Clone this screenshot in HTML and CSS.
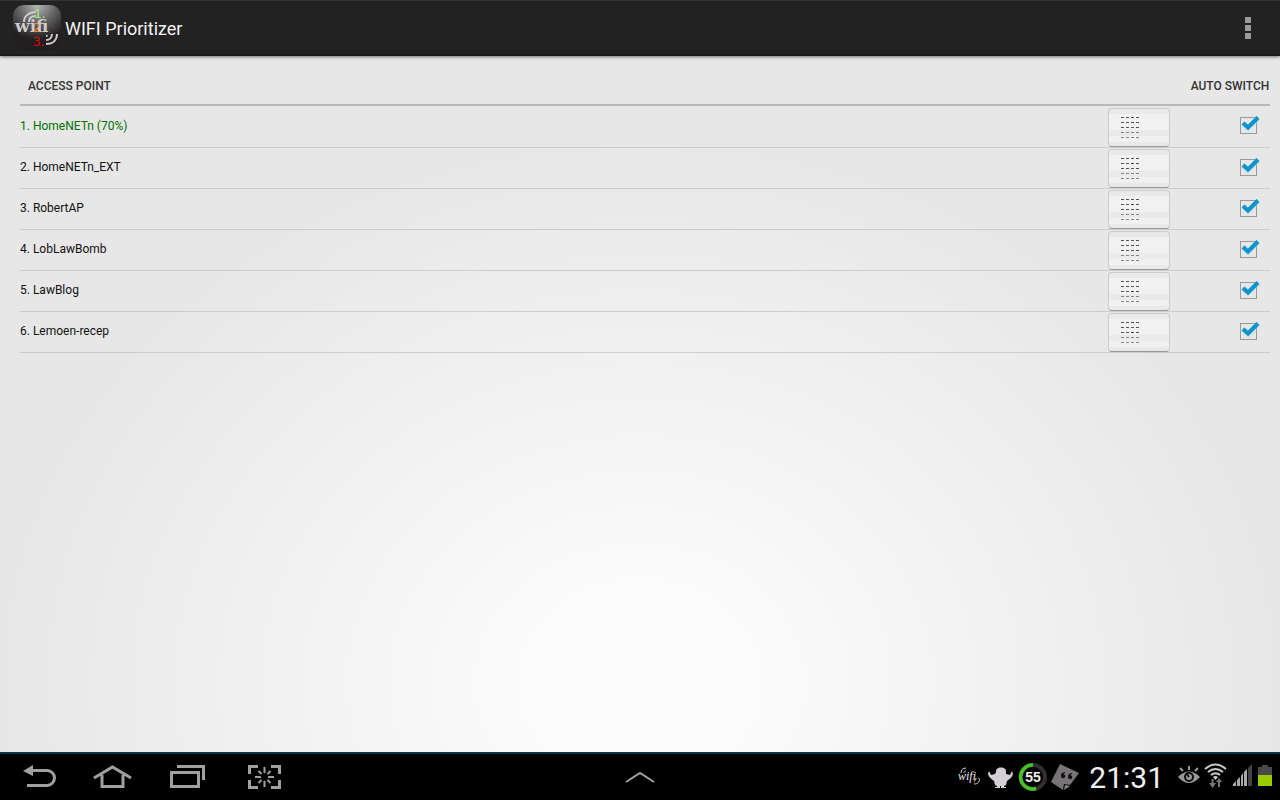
FILE: index.html
```html
<!DOCTYPE html>
<html lang="en">
<head>
    <meta charset="UTF-8">
    <meta name="viewport" content="width=device-width, initial-scale=1.0">
    <title>WIFI Prioritizer</title>
    <link rel="stylesheet" href="styles.css">
</head>
<body>
    <!-- shared icons -->
    <svg class="defs" width="0" height="0" aria-hidden="true">
        <symbol id="grip" viewBox="0 0 19 23">
            <path d="M0 1.5h19M0 6.5h19M0 11.5h19" stroke="#555" stroke-dasharray="3 2" fill="none"/>
            <path d="M0 16.5h19M0 21.5h19" stroke="#858585" stroke-dasharray="3 2" fill="none"/>
        </symbol>
        <symbol id="tick" viewBox="0 0 20 18">
            <path d="M2 8l5 5L17 3" stroke="#9fd9ee" stroke-width="6" fill="none" opacity=".4"/>
            <path d="M2 8l5 4.500L17 2.500" stroke="#0d94cc" stroke-width="4" fill="none"/>
        </symbol>
    </svg>

    <header class="action-bar">
        <svg class="app-icon" viewBox="0 0 48 46" role="img" aria-label="WIFI Prioritizer">
            <defs>
                <radialGradient id="shine" cx="50%" cy="0%" r="75%">
                    <stop offset="0" stop-color="#b5b5b5"/>
                    <stop offset=".5" stop-color="#666"/>
                    <stop offset="1" stop-color="#231f20"/>
                </radialGradient>
            </defs>
            <rect width="48" height="46" rx="11" fill="url(#shine)"/>
            <g fill="none" stroke="#ccc" stroke-width="2">
                <path d="M11 17C11 11 16 7 23 7M16 17c0-4 3-6 7-6"/>
                <path d="M44 29c0 6-4 10-11 10M39 29c0 4-3 6-6 6M34 30c0 1-1 1-1 1"/>
            </g>
            <text x="2" y="27" class="logo-word">wifi</text>
            <g class="logo-num">
                <text x="21" y="13" fill="#a5f57a">1.</text>
                <text x="20" y="27" fill="#f58634">2</text>
                <text x="20" y="41" fill="#f00000">3.</text>
            </g>
        </svg>
        <h1>WIFI Prioritizer</h1>
        <button class="menu" type="button" aria-label="More options">
            <svg width="6" height="22" viewBox="0 0 6 22"><path d="M0 0h6v6H0zM0 8h6v6H0zM0 16h6v6H0z" fill="#999"/></svg>
        </button>
    </header>

    <main class="content">
        <table class="networks">
            <thead>
                <tr>
                    <th class="name">Access point</th>
                    <th class="order"></th>
                    <th class="switch">Auto switch</th>
                </tr>
            </thead>
            <tbody>
                <tr class="connected">
                    <td class="name">1. HomeNETn (70%)</td>
                    <td class="order"><button class="handle" type="button" aria-label="Move HomeNETn"><svg><use href="#grip"/></svg></button></td>
                    <td class="switch"><label class="check"><input type="checkbox" aria-label="Auto switch HomeNETn" checked><svg><use href="#tick"/></svg></label></td>
                </tr>
                <tr>
                    <td class="name">2. HomeNETn_EXT</td>
                    <td class="order"><button class="handle" type="button" aria-label="Move HomeNETn_EXT"><svg><use href="#grip"/></svg></button></td>
                    <td class="switch"><label class="check"><input type="checkbox" aria-label="Auto switch HomeNETn_EXT" checked><svg><use href="#tick"/></svg></label></td>
                </tr>
                <tr>
                    <td class="name">3. RobertAP</td>
                    <td class="order"><button class="handle" type="button" aria-label="Move RobertAP"><svg><use href="#grip"/></svg></button></td>
                    <td class="switch"><label class="check"><input type="checkbox" aria-label="Auto switch RobertAP" checked><svg><use href="#tick"/></svg></label></td>
                </tr>
                <tr>
                    <td class="name">4. LobLawBomb</td>
                    <td class="order"><button class="handle" type="button" aria-label="Move LobLawBomb"><svg><use href="#grip"/></svg></button></td>
                    <td class="switch"><label class="check"><input type="checkbox" aria-label="Auto switch LobLawBomb" checked><svg><use href="#tick"/></svg></label></td>
                </tr>
                <tr>
                    <td class="name">5. LawBlog</td>
                    <td class="order"><button class="handle" type="button" aria-label="Move LawBlog"><svg><use href="#grip"/></svg></button></td>
                    <td class="switch"><label class="check"><input type="checkbox" aria-label="Auto switch LawBlog" checked><svg><use href="#tick"/></svg></label></td>
                </tr>
                <tr>
                    <td class="name">6. Lemoen-recep</td>
                    <td class="order"><button class="handle" type="button" aria-label="Move Lemoen-recep"><svg><use href="#grip"/></svg></button></td>
                    <td class="switch"><label class="check"><input type="checkbox" aria-label="Auto switch Lemoen-recep" checked><svg><use href="#tick"/></svg></label></td>
                </tr>
            </tbody>
        </table>
    </main>

    <footer class="system-bar">
        <nav class="keys">
            <button type="button" aria-label="Back">
                <svg viewBox="0 0 43 28"><path d="M14 7.500h15a7.500 7.500 0 0 1 0 15H9" fill="none" stroke="#a0a0a0" stroke-width="3"/><path d="M5 8L15 2v11z" fill="#a0a0a0"/></svg>
            </button>
            <button type="button" aria-label="Home">
                <svg viewBox="0 0 43 28"><path d="M9 12v11.500h21V12M1 15L19.500 4 38 15" fill="none" stroke="#a0a0a0" stroke-width="3"/></svg>
            </button>
            <button type="button" aria-label="Recent apps">
                <svg viewBox="0 0 43 28"><path d="M3.500 9.500h27v14h-27zM9 3.500h26.500V17" fill="none" stroke="#a0a0a0" stroke-width="3"/></svg>
            </button>
            <button type="button" aria-label="Screenshot">
                <svg viewBox="0 0 43 28">
                    <path d="M6.500 11V3.500H15M28 3.500h8.500V11M36.500 17v7.500H28M15 24.500H6.500V17" fill="none" stroke="#a0a0a0" stroke-width="3"/>
                    <path d="M21.500 4v6M21.500 18v6M12 14h6M25 14h6M15.500 8l3 3M27.500 8l-3 3M15.500 20l3-3M27.500 20l-3-3" fill="none" stroke="#a0a0a0" stroke-width="2"/>
                </svg>
            </button>
        </nav>

        <button class="expand" type="button" aria-label="Show mini apps">
            <svg width="30" height="14" viewBox="0 0 30 14"><path d="M1 12L15 3l14 9" fill="none" stroke="#a0a0a0" stroke-width="2"/></svg>
        </button>

        <div class="status">
            <div class="notices">
                <svg viewBox="0 0 32 28" role="img" aria-label="WIFI Prioritizer running">
                    <g fill="none" stroke="#ddd">
                        <path d="M8 10c0-3 2-5 5-5M11 10c0-1 1-2 2-2M26 15c1 4-1 6-5 6M23 15c0 2-1 3-2 3"/>
                    </g>
                    <text x="5" y="17" class="mini-word">wifi</text>
                </svg>
                <svg viewBox="0 0 32 28" role="img" aria-label="Android notification">
                    <path d="M11 9c0-3 1-4 3-4l1-1 1 1 1-1 1 1c2 0 3 1 3 4v2l4 1 2-4 1 3c-1 4-4 5-6 7l-1 4-2 1v1h2v1h-5v-2h-1v2h-5v-1h2v-1l-2-1-1-4c-2-2-5-3-6-7l1-3 2 4 4-1z" fill="#d4cfd4"/>
                </svg>
                <svg viewBox="0 0 32 28" role="img" aria-label="Battery 55 percent">
                    <circle cx="16" cy="14" r="12" fill="none" stroke="#303030" stroke-width="4"/>
                    <path d="M16 2a12 12 0 1 0 3 23.500" fill="none" stroke="#287f18" stroke-width="4"/>
                    <path d="M16 2a12 12 0 1 0 3 23.500" fill="none" stroke="#4cc32b" stroke-width="3"/>
                    <text x="16" y="19" class="level">55</text>
                </svg>
                <svg viewBox="0 0 32 28" role="img" aria-label="Quote">
                    <path d="M11 1l19 9-9 12-6-1-1 6L2 19z" fill="#777377"/>
                    <path d="M16 22l5 1-6 4z" fill="#8a868a"/>
                    <path d="M16 9c-4 0-5 4-3 6 2 1 4-1 3-3l-2-1 2-1zM23 10c-4 0-5 4-3 6 2 1 4-1 3-3l-2-1 2-1z" fill="#111"/>
                </svg>
            </div>
            <time class="clock">21:31</time>
            <div class="signals">
                <svg viewBox="0 0 26 28" role="img" aria-label="Smart stay">
                    <path d="M2 14q11-11 22 0-11 12-22 0z" fill="#999"/>
                    <circle cx="13" cy="14" r="5" fill="#111"/>
                    <circle cx="13" cy="14" r="3" fill="#999"/>
                    <path d="M13 14l-3-4" stroke="#111" stroke-width="2"/>
                    <path d="M13 3v4M4 5l3 3M22 5l-3 3" stroke="#999" stroke-width="2"/>
                </svg>
                <svg viewBox="0 0 26 28" role="img" aria-label="Wi-Fi">
                    <path d="M3 6q10.500-9 21 0M6 9q7.500-6 15 0M9 12q4.500-3.500 9 0" fill="none" stroke="#ccc" stroke-width="2"/>
                    <path d="M11 14q2.500-2 5 0l-2.500 3z" fill="#ccc"/>
                    <path d="M10.500 16v6M17 24v-6" stroke="#777" stroke-width="2"/>
                    <path d="M7 20h7l-3.500 5zM14 19h6l-3-4z" fill="#777"/>
                </svg>
                <svg viewBox="0 0 26 28" role="img" aria-label="Mobile signal">
                    <path d="M5 23v-2l3-3v5zM9 23v-6l3-3v9zM13 23V13l2-3v13zM16 23V9l3-3v17z" fill="#aaa"/>
                    <path d="M20 23V5l4-4v22z" fill="#444"/>
                </svg>
                <svg viewBox="0 0 26 28" role="img" aria-label="Battery">
                    <path d="M4 4h4V2h6v2h4v19H4z" fill="#484848"/>
                    <path d="M4 12h14v11H4z" fill="#99cc00"/>
                </svg>
            </div>
        </div>
    </footer>
</body>
</html>
```
FILE: styles.css
```css
* {
    box-sizing: border-box;
}

body {
    margin: 0;
    min-height: 100vh;
    display: flex;
    flex-direction: column;
    font-family: Roboto, "Liberation Sans", sans-serif;
    font-size: 12px;
    color: #111;
    background: #e7e7e7;
}

button {
    padding: 0;
    border: 0;
    background: none;
    cursor: pointer;
}

svg {
    display: block;
}

.defs {
    position: absolute;
}

/* top bar */
.action-bar {
    position: relative;
    display: flex;
    align-items: center;
    height: 56px;
    padding: 0 29px 0 13px;
    background: #222;
    border-top: 1px solid #333;
    border-bottom: 2px solid #1a1a1a;
    box-shadow: 0 1px 3px rgba(0, 0, 0, 0.5);
}

.app-icon {
    width: 48px;
    height: 46px;
    margin-right: 4px;
}

.logo-word {
    font: bold 17px "DejaVu Serif", serif;
    fill: #ccc;
}

.logo-num {
    font: 12px "DejaVu Sans", sans-serif;
}

.action-bar h1 {
    flex: 1;
    margin: 0;
    padding-top: 2px;
    font-size: 18px;
    font-weight: 400;
    color: #f3f3f3;
}

/* list */
.content {
    flex: 1;
    padding: 10px 10px 0 20px;
    background: radial-gradient(ellipse 640px 540px at 50% 90%, #fcfcfc, #fbfbfb 18%, #e7e7e7);
}

.networks {
    width: 100%;
    border-collapse: separate;
    border-spacing: 0;
    table-layout: fixed;
}

.networks th {
    height: 40px;
    padding: 2px 0 0;
    border-bottom: 2px solid #b9b9b9;
    font-size: 12px;
    font-weight: 500;
    text-transform: uppercase;
    color: #333;
    white-space: nowrap;
}

.networks th.name {
    padding-left: 8px;
    text-align: left;
}

.networks td {
    height: 41px;
    padding: 0 0 2px;
    border-bottom: 1px solid #cdcdcd;
}

.networks tbody tr:first-child td {
    height: 42px;
}

.networks .order {
    width: 82px;
    padding-bottom: 0;
    vertical-align: bottom;
}

.networks .switch {
    width: 80px;
}

.connected .name {
    color: #007000;
}

.handle {
    display: block;
    width: 62px;
    height: 39px;
    padding-left: 12px;
    border: 1px solid #ccc;
    border-bottom-color: #999;
    border-radius: 4px;
    background: linear-gradient(#e9e9e9 5px, #f1f1f1 5px, #f1f1f1 21px, #eaeaea 21px, #eaeaea 27px, #f1f1f1 27px, #f1f1f1 33px, #e9e9e9 33px);
}

.handle svg {
    width: 19px;
    height: 23px;
}

.check {
    position: relative;
    display: block;
    width: 17px;
    margin-left: 50px;
}

.check input {
    display: block;
    appearance: none;
    width: 17px;
    height: 17px;
    margin: 0;
    border: 1px solid #999;
}

.check svg {
    position: absolute;
    top: -2px;
    left: 1px;
    width: 20px;
    height: 18px;
    pointer-events: none;
}

.check input:not(:checked) + svg {
    display: none;
}

/* bottom bar */
.system-bar {
    display: grid;
    grid-template-columns: 1fr auto 1fr;
    height: 48px;
    background: #000;
    border-top: 2px solid #0e3547;
}

.keys {
    display: flex;
    padding-left: 2px;
}

.keys button {
    width: 75px;
}

.keys svg {
    width: 43px;
    height: 28px;
    margin: 0 auto;
}

.status,
.notices,
.signals {
    display: flex;
    align-items: center;
}

.status {
    justify-content: flex-end;
}

.notices svg {
    width: 32px;
    height: 28px;
}

.signals svg {
    width: 26px;
    height: 28px;
}

.clock {
    padding: 0 12px 0 8px;
    font-size: 30px;
    color: #f0f0f0;
}

.mini-word {
    font: italic 12px "Liberation Serif", serif;
    fill: #eee;
}

.level {
    font: bold 14px "Liberation Sans", sans-serif;
    fill: #eee;
    text-anchor: middle;
}
```
